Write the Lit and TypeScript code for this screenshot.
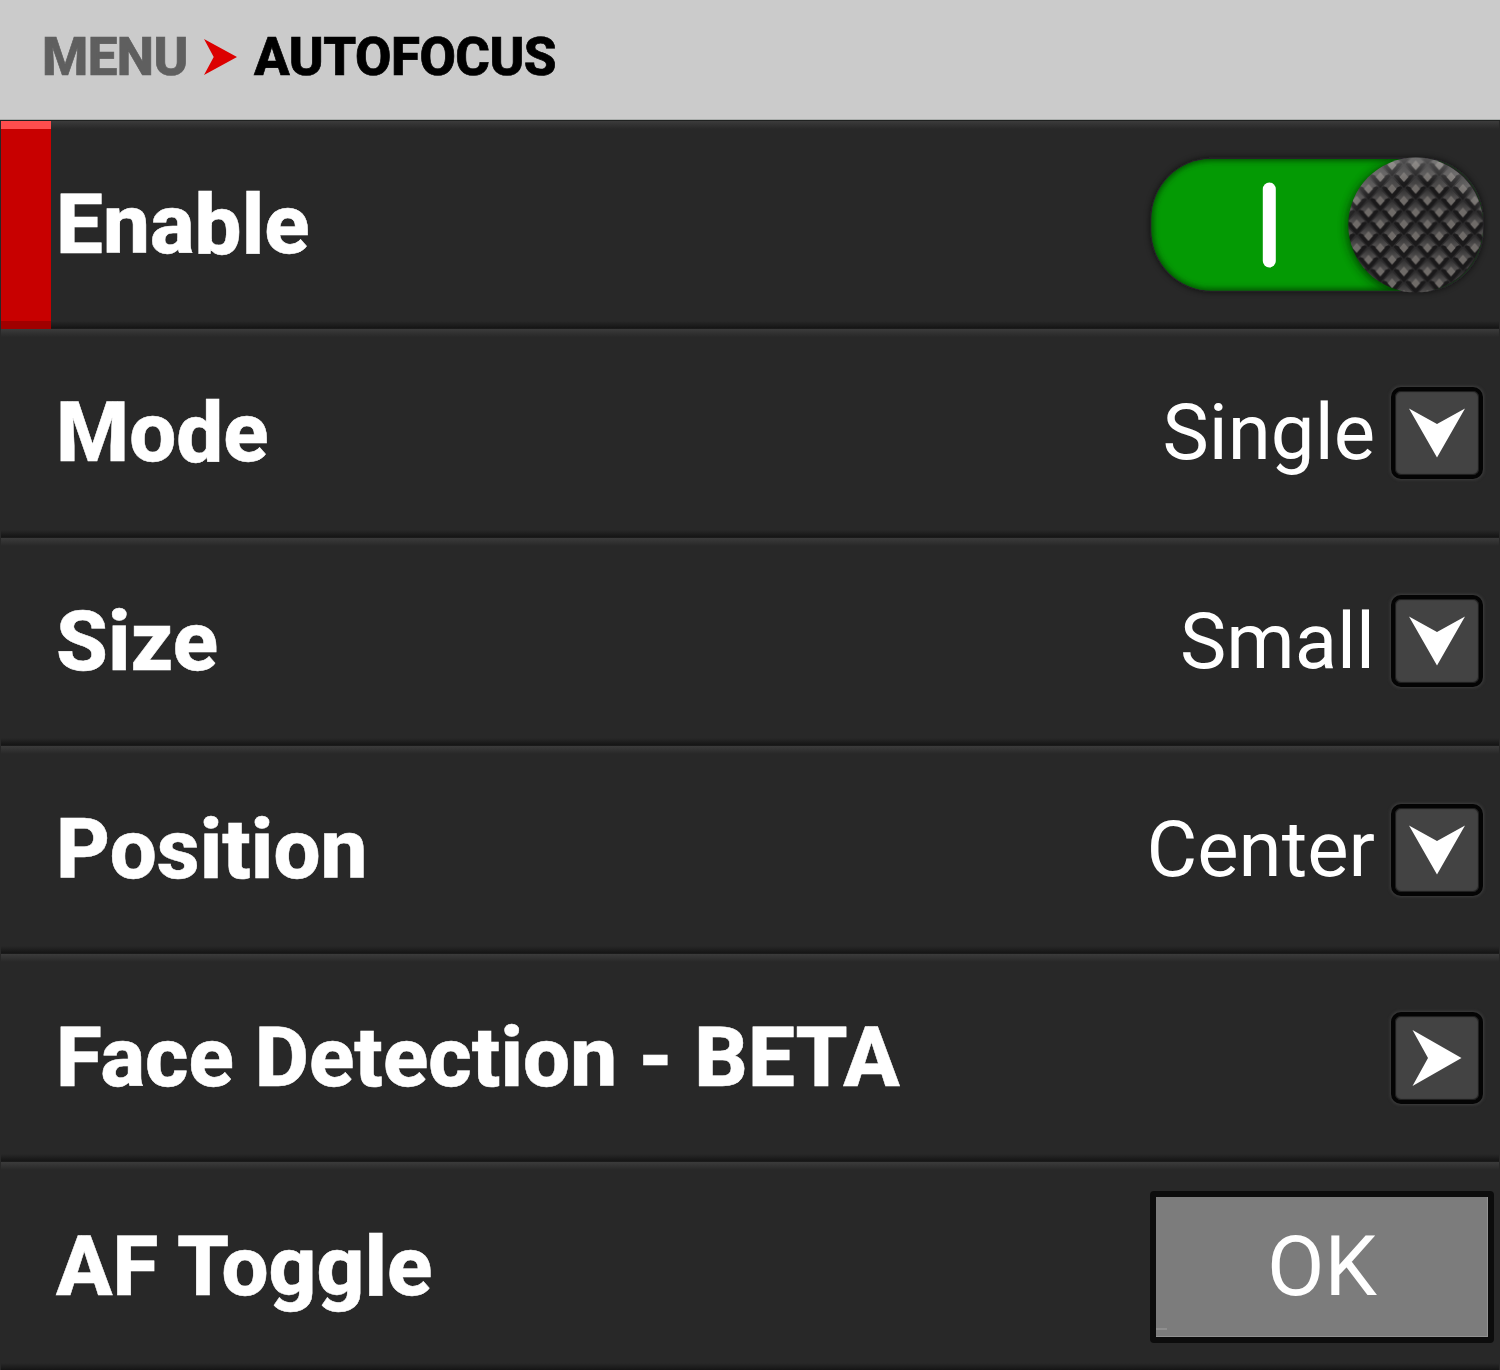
import { LitElement, html, svg, css } from "lit";
import { customElement, property } from "lit/decorators.js";

const knobTile = svg`
  <linearGradient id="facet" gradientUnits="userSpaceOnUse" x1="0" y1="-12" x2="0" y2="5">
    <stop offset="0" stop-color="#2e2d2e"></stop>
    <stop offset="0.5" stop-color="#4d4b4b"></stop>
    <stop offset="1" stop-color="#555352"></stop>
  </linearGradient>
  <pattern id="knurl" x="1403.9" y="200.7" width="23.6" height="23.6" patternUnits="userSpaceOnUse">
    <rect width="23.6" height="23.6" fill="#2c2b2c"></rect>
    ${[[11.8, 11.8], [0, 0], [23.6, 0], [0, 23.6], [23.6, 23.6]].map(([x, y]) => svg`
      <g transform="translate(${x} ${y})">
        <path d="M0 -11.5L8.6 -2.8L4.5 0.5L0 5L-4.5 0.5L-8.6 -2.8Z" fill="url(#facet)"></path>
        <path d="M-10.5 -1.2L-8 -2.6L-5.5 -1.6L0 4.6L5.5 -1.6L8 -2.6L10.5 -1.2L0 11Z" fill="#1a191a"></path>
        <path d="M0 -4.8L4.4 0L0 5L-4.4 0Z" fill="#6f6b68"></path>
      </g>`)}
  </pattern>`;

@customElement("toggle-switch")
class ToggleSwitch extends LitElement {
  static styles = css`
    :host { display: block; width: 350px; height: 150px; margin-right: -6px; }
    svg { display: block; }
  `;
  render() {
    return html`<svg width="350" height="150" viewBox="1140 150 350 150">
      <defs>
        ${knobTile}
        <filter id="soft" x="-20%" y="-20%" width="140%" height="140%"><feGaussianBlur stdDeviation="3"></feGaussianBlur></filter>
        <filter id="wide" x="-20%" y="-20%" width="140%" height="140%"><feGaussianBlur stdDeviation="5"></feGaussianBlur></filter>
        <clipPath id="track"><rect x="1151.5" y="159" width="331" height="131.5" rx="60"></rect></clipPath>
        <radialGradient id="sheen" gradientUnits="userSpaceOnUse" cx="1416" cy="255" r="100">
          <stop offset="0.72" stop-color="#fff" stop-opacity="0"></stop>
          <stop offset="1" stop-color="#fff" stop-opacity="0.28"></stop>
        </radialGradient>
      </defs>
      <rect x="1150" y="157.5" width="334" height="134.5" rx="62" fill="#111" filter="url(#soft)" opacity="0.6"></rect>
      <rect x="1150.5" y="158" width="333" height="133.5" rx="61" fill="#262229"></rect>
      <g clip-path="url(#track)">
        <rect x="1151" y="159" width="332" height="132" fill="#049a04"></rect>
        <rect x="1149.5" y="157" width="335" height="135.5" rx="62" fill="none" stroke="#003c00" stroke-width="6" filter="url(#soft)"></rect>
        <circle cx="1415" cy="227" r="68" fill="#002000" opacity="0.75" filter="url(#wide)"></circle>
        <path d="M1416 157H1490V293H1416Z" fill="#232323"></path>
      </g>
      <rect x="1262.8" y="182.5" width="13" height="85" rx="6.5" fill="#fff"></rect>
      <circle cx="1415.8" cy="225" r="67.5" fill="url(#knurl)"></circle>
      <circle cx="1415.8" cy="225" r="67.5" fill="url(#sheen)"></circle>
    </svg>`;
  }
}

@customElement("arrow-button")
class ArrowButton extends LitElement {
  @property() direction = "down";
  static styles = css`
    :host { display: block; width: 84px; height: 84px; border: 4px solid #040404; border-radius: 10px; background: #434343;
      margin: 0 1px 1px 0; box-shadow: 0 0 3px 1px #3d3d3d, inset 0 0 1px 1px #1c1c1c; }
    .icon { display: block; width: 84px; height: 84px; fill: #fff; }
    .right { transform: rotate(-90deg); }
  `;
  render() {
    return html`<svg class="icon ${this.direction}" viewBox="0 0 84 84"><path d="M14 17.5L42 33L70 17.5L42 66.5Z"></path></svg>`;
  }
}

type Item = { label: string; kind: "toggle" | "select" | "submenu" | "action"; value?: string };

const items: Item[] = [
  { label: "Enable", kind: "toggle" },
  { label: "Mode", kind: "select", value: "Single" },
  { label: "Size", kind: "select", value: "Small" },
  { label: "Position", kind: "select", value: "Center" },
  { label: "Face Detection - BETA", kind: "submenu" },
  { label: "AF Toggle", kind: "action", value: "OK" },
];

@customElement("app-root")
class AppRoot extends LitElement {
  static styles = css`
    :host { display: block; width: 1500px; height: 1370px; overflow: hidden; background: #282828; font-family: Roboto, sans-serif; }
    .header { box-sizing: border-box; height: 120px; display: flex; align-items: center; padding: 0 0 5px 42px; background: #cbcbcb; border-bottom: 1px solid #a9adab; font-size: 52.8px; font-weight: 800; letter-spacing: -0.5px; -webkit-text-stroke: 0.7px currentColor; white-space: pre; }
    .parent { color: #5f5f5f; }
    .crumb { width: 33px; height: 36px; margin: 0 17px 0 16px; fill: #dc0000; stroke: none; }
    .list { border-top: 1px solid #202221; }
    .row { box-sizing: border-box; height: 208.3px; display: flex; align-items: center; margin: 0 1px; padding-right: 15px; color: #fff;
      background: linear-gradient(#3b3b3b, #282828 8px, #282828 calc(100% - 8px), #151515 calc(100% - 1px), #202020); }
    .marker { width: 50px; height: 208px; margin-right: -50px; background: linear-gradient(#ff4d4d 8px, #c80000 8px, #c80000 200px, #a00000 200px); }
    .label { flex: 1; padding-left: 55px; font-size: 83.5px; font-weight: 800; line-height: 100px; letter-spacing: 0.07px; white-space: pre; -webkit-text-stroke: 0.5px currentColor; }
    .value { font-size: 78px; line-height: 100px; margin: 0 16px 0 0; }
    .ok { position: relative; box-sizing: border-box; width: 344px; height: 152px; margin-right: -10px; border: 6px solid #0c0c0c; border-radius: 4px; background: #7c7c7c; box-shadow: inset -1px -1px #929292; font-size: 83.5px; display: flex; align-items: center; justify-content: center; }
    .tick { position: absolute; left: 0; bottom: 7px; width: 11px; height: 2px; background: #8e8e8e; }
  `;

  control(item: Item) {
    if (item.kind === "toggle") return html`<toggle-switch></toggle-switch>`;
    if (item.kind === "submenu") return html`<arrow-button direction="right"></arrow-button>`;
    if (item.kind === "action") return html`<div class="ok"><span>${item.value}</span><i class="tick"></i></div>`;
    return html`<span class="value">${item.value}</span><arrow-button></arrow-button>`;
  }

  render() {
    return html`
      <div class="header">
        <span class="parent">MENU</span>
        <svg class="crumb" viewBox="0 0 34 36" preserveAspectRatio="none"><path d="M0 0L34 18L0 36L10 18Z"></path></svg>
        <span class="current">AUTOFOCUS</span>
      </div>
      <div class="list">
        ${items.map((item, i) => html`<div class="row">
          ${i === 0 ? html`<div class="marker"></div>` : ""}
          <span class="label">${item.label}</span>${this.control(item)}
        </div>`)}
      </div>`;
  }
}
